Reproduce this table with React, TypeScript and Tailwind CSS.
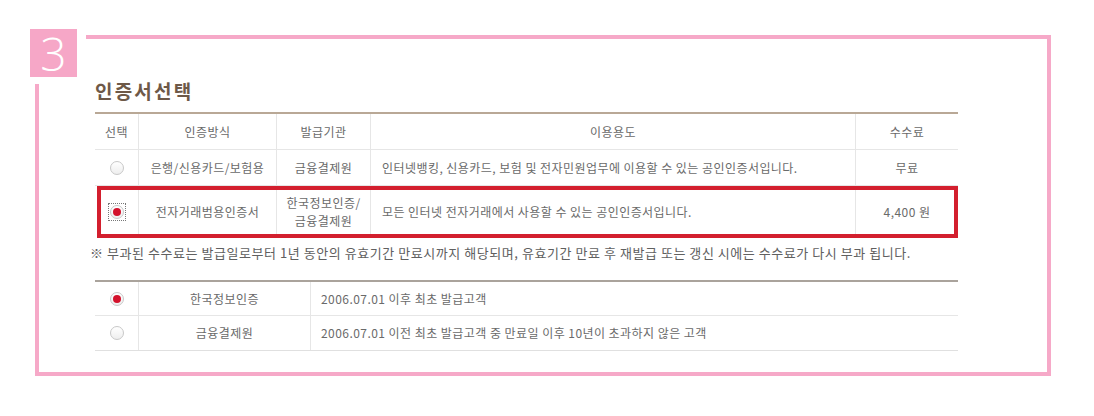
import React from "react";

const Radio: React.FC<{ checked?: boolean; focused?: boolean }> = ({ checked = false, focused = false }) => {
    const dot = (
        <span className="w-[14px] h-[14px] rounded-full border border-[#c8c8c8] bg-gradient-to-b from-white to-[#eeeeee] flex items-center justify-center">
            {checked && <span className="w-[8px] h-[8px] rounded-full bg-[#d3122c]" />}
        </span>
    );
    if (!focused) return dot;
    return (
        <span className="w-[18px] h-[18px] border border-dotted border-[#777] flex items-center justify-center">
            {dot}
        </span>
    );
};

const App: React.FC = () => {
    return (
        <div className="relative w-[1094px] h-[416px] bg-white pt-[35px] pl-[35px] font-['Noto_Sans_CJK_KR','Noto_Sans',sans-serif]">
            {/* Frame */}
            <div className="w-[1016px] h-[341px] border-4 border-[#f6a9c8] pl-[56px] pt-[40px]">
                <h2 className="text-[19px] leading-[24px] font-bold text-[#6e5948] tracking-[2.2px]">인증서선택</h2>

                {/* Table 1 */}
                <div className="relative mt-[9px] w-[863px] border-t-2 border-[#b9a896] text-[12px] tracking-[0.45px] text-[#6a6a6a]">
                    <div className="flex h-[36px] border-b border-[#e6e6e6]">
                        <div className="w-[43px] flex items-center justify-center">선택</div>
                        <div className="w-[138px] flex items-center justify-center border-l border-[#e6e6e6]">인증방식</div>
                        <div className="w-[94px] flex items-center justify-center border-l border-[#e6e6e6]">발급기관</div>
                        <div className="w-[485px] flex items-center justify-center border-l border-[#e6e6e6]">이용용도</div>
                        <div className="w-[103px] flex items-center justify-center border-l border-[#e6e6e6]">수수료</div>
                    </div>
                    <div className="flex h-[36px] border-b border-[#e6e6e6]">
                        <div className="w-[43px] flex items-center justify-center"><Radio /></div>
                        <div className="w-[138px] flex items-center justify-center border-l border-[#e6e6e6]">은행/신용카드/보험용</div>
                        <div className="w-[94px] flex items-center justify-center border-l border-[#e6e6e6]">금융결제원</div>
                        <div className="w-[485px] flex items-center pl-[11px] border-l border-[#e6e6e6]">인터넷뱅킹, 신용카드, 보험 및 전자민원업무에 이용할 수 있는 공인인증서입니다.</div>
                        <div className="w-[103px] flex items-center justify-center border-l border-[#e6e6e6]">무료</div>
                    </div>
                    <div className="flex h-[52px]">
                        <div className="w-[43px] flex items-center justify-center"><Radio checked focused /></div>
                        <div className="w-[138px] flex items-center justify-center border-l border-[#e6e6e6]">전자거래범용인증서</div>
                        <div className="w-[94px] flex flex-col items-center justify-center leading-[18px] border-l border-[#e6e6e6]">
                            <span>한국정보인증/</span>
                            <span>금융결제원</span>
                        </div>
                        <div className="w-[485px] flex items-center pl-[11px] border-l border-[#e6e6e6]">모든 인터넷 전자거래에서 사용할 수 있는 공인인증서입니다.</div>
                        <div className="w-[103px] flex items-center justify-center border-l border-[#e6e6e6]">4,400 원</div>
                    </div>
                    {/* Highlight */}
                    <div className="absolute left-[2px] top-[72px] w-[861px] h-[52px] border-4 border-[#d31f2e]" />
                </div>

                <p className="mt-[5px] -ml-[5px] text-[13px] leading-[20px] tracking-[0.55px] text-[#606060] whitespace-nowrap">
                    ※ 부과된 수수료는 발급일로부터 1년 동안의 유효기간 만료시까지 해당되며, 유효기간 만료 후 재발급 또는 갱신 시에는 수수료가 다시 부과 됩니다.
                </p>

                {/* Table 2 */}
                <div className="mt-[17px] w-[863px] border-t-2 border-[#aaa39c] text-[12px] tracking-[0.45px] text-[#6a6a6a]">
                    <div className="flex h-[34px] border-b border-[#e6e6e6]">
                        <div className="w-[43px] flex items-center justify-center"><Radio checked /></div>
                        <div className="w-[172px] flex items-center justify-center border-l border-[#e6e6e6]">한국정보인증</div>
                        <div className="w-[648px] flex items-center pl-[10px] border-l border-[#e6e6e6]">2006.07.01 이후 최초 발급고객</div>
                    </div>
                    <div className="flex h-[35px] border-b border-[#e0e0e0]">
                        <div className="w-[43px] flex items-center justify-center"><Radio /></div>
                        <div className="w-[172px] flex items-center justify-center border-l border-[#e6e6e6]">금융결제원</div>
                        <div className="w-[648px] flex items-center pl-[10px] border-l border-[#e6e6e6]">2006.07.01 이전 최초 발급고객 중 만료일 이후 10년이 초과하지 않은 고객</div>
                    </div>
                </div>
            </div>

            {/* Step badge */}
            <div className="absolute left-[30px] top-[29px] bg-white pr-[9px] pb-[7px]">
                <div className="w-[47px] h-[48px] bg-[#f6a7c7] flex items-center justify-center text-white text-[46px] font-light leading-none font-['Open_Sans',sans-serif]">
                    3
                </div>
            </div>
        </div>
    );
};

export default App;
